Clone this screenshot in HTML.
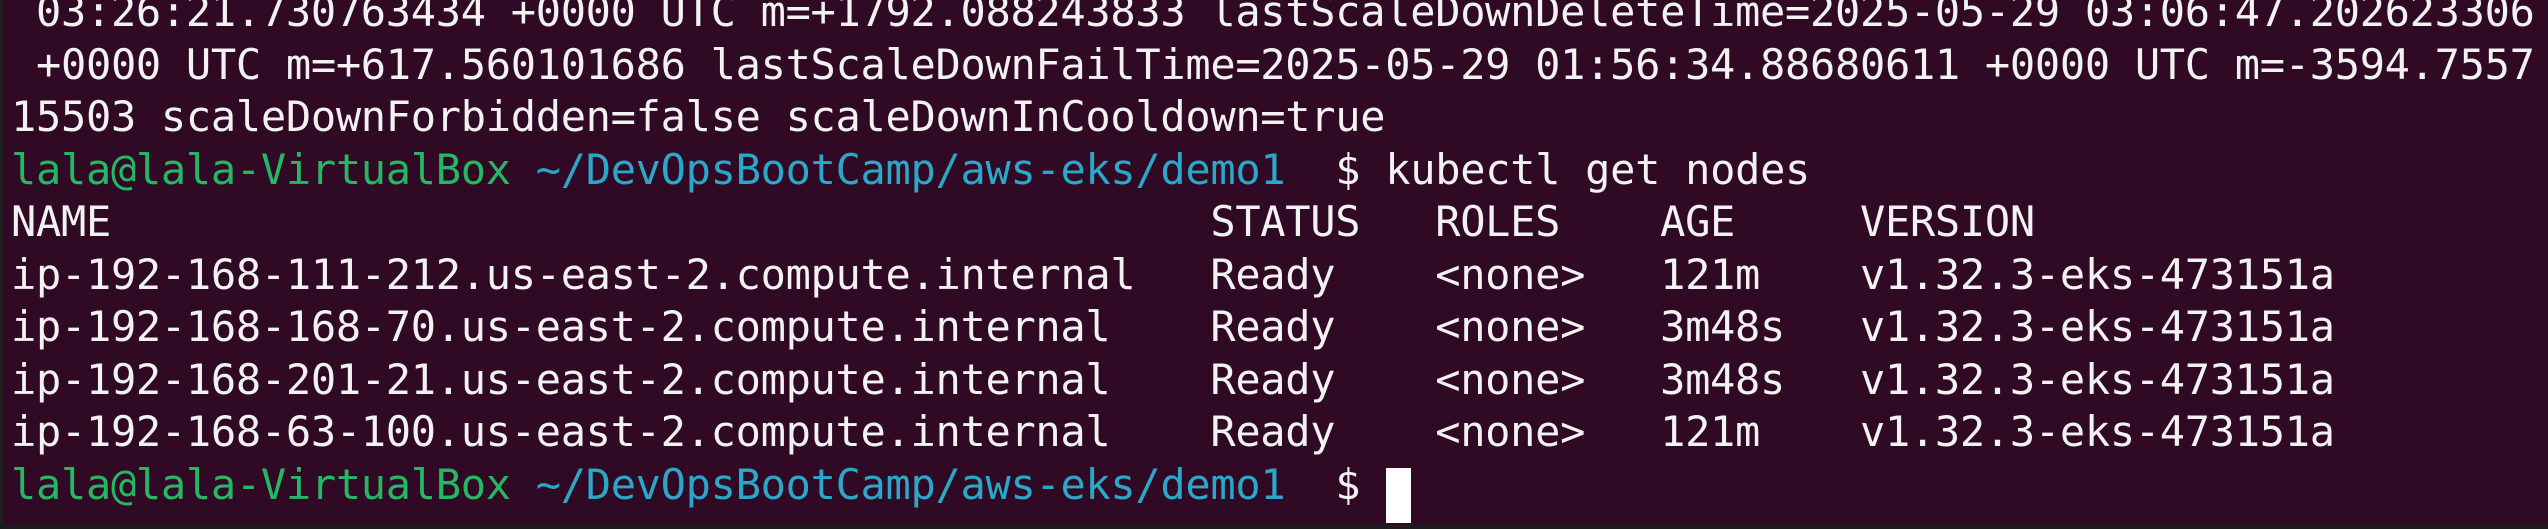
<!DOCTYPE html>
<html><head><meta charset="utf-8"><style>
html,body{margin:0;padding:0;}
body{width:2548px;height:529px;background:#300a24;overflow:hidden;position:relative;}
.l{position:absolute;left:11px;white-space:pre;font-family:"DejaVu Sans Mono","Liberation Mono",monospace;font-size:42px;letter-spacing:-0.3px;color:#f2f2f2;line-height:52px;height:52px;}
.g{color:#26b765;}
.b{color:#2aa7c9;}
#cur{position:absolute;left:1386px;top:468px;width:25px;height:55px;background:#fff;}
#bot{position:absolute;left:0;top:525px;width:2548px;height:4px;background:#1c1c1c;}
#lb{position:absolute;left:0;top:0;width:3px;height:529px;background:#1e1e1e;}
</style></head><body>
<div id="lb"></div>
<div class="l" style="top:-14px"> 03:26:21.730763434 +0000 UTC m=+1792.088243833 lastScaleDownDeleteTime=2025-05-29 03:06:47.202623306</div>
<div class="l" style="top:39px"> +0000 UTC m=+617.560101686 lastScaleDownFailTime=2025-05-29 01:56:34.88680611 +0000 UTC m=-3594.7557</div>
<div class="l" style="top:91px">15503 scaleDownForbidden=false scaleDownInCooldown=true</div>
<div class="l" style="top:144px"><span class="g">lala@lala-VirtualBox</span> <span class="b">~/DevOpsBootCamp/aws-eks/demo1</span>  $ kubectl get nodes</div>
<div class="l" style="top:196px">NAME                                            STATUS   ROLES    AGE     VERSION</div>
<div class="l" style="top:249px">ip-192-168-111-212.us-east-2.compute.internal   Ready    &lt;none&gt;   121m    v1.32.3-eks-473151a</div>
<div class="l" style="top:301px">ip-192-168-168-70.us-east-2.compute.internal    Ready    &lt;none&gt;   3m48s   v1.32.3-eks-473151a</div>
<div class="l" style="top:354px">ip-192-168-201-21.us-east-2.compute.internal    Ready    &lt;none&gt;   3m48s   v1.32.3-eks-473151a</div>
<div class="l" style="top:406px">ip-192-168-63-100.us-east-2.compute.internal    Ready    &lt;none&gt;   121m    v1.32.3-eks-473151a</div>
<div class="l" style="top:459px"><span class="g">lala@lala-VirtualBox</span> <span class="b">~/DevOpsBootCamp/aws-eks/demo1</span>  $ </div>
<div id="cur"></div>
<div id="bot"></div>
</body></html>
